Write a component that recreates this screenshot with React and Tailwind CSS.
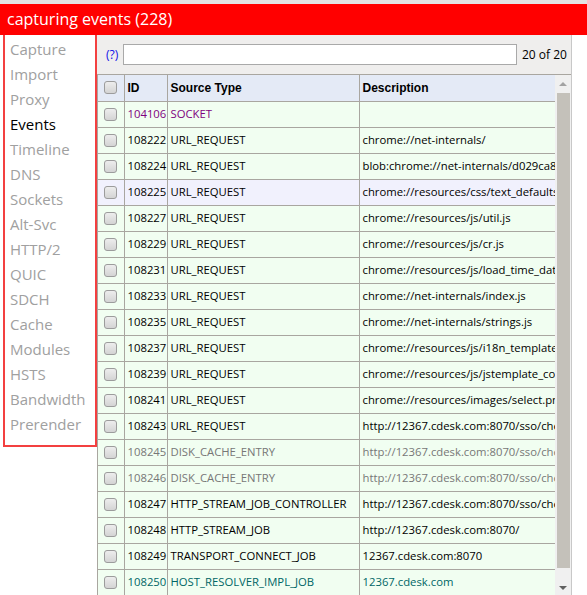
import React from "react";

const NAV = ["Capture","Import","Proxy","Events","Timeline","DNS","Sockets","Alt-Svc","HTTP/2","QUIC","SDCH","Cache","Modules","HSTS","Bandwidth","Prerender"];

const ROWS = [
  ["104106","SOCKET","","purple"],
  ["108222","URL_REQUEST","chrome://net-internals/",""],
  ["108224","URL_REQUEST","blob:chrome://net-internals/d029ca8e-7c1f","" ],
  ["108225","URL_REQUEST","chrome://resources/css/text_defaults.css","sel"],
  ["108227","URL_REQUEST","chrome://resources/js/util.js",""],
  ["108229","URL_REQUEST","chrome://resources/js/cr.js",""],
  ["108231","URL_REQUEST","chrome://resources/js/load_time_data.js",""],
  ["108233","URL_REQUEST","chrome://net-internals/index.js",""],
  ["108235","URL_REQUEST","chrome://net-internals/strings.js",""],
  ["108237","URL_REQUEST","chrome://resources/js/i18n_template.js",""],
  ["108239","URL_REQUEST","chrome://resources/js/jstemplate_compiled.js",""],
  ["108241","URL_REQUEST","chrome://resources/images/select.png",""],
  ["108243","URL_REQUEST","http://12367.cdesk.com:8070/sso/checklogin",""],
  ["108245","DISK_CACHE_ENTRY","http://12367.cdesk.com:8070/sso/checklogin","gray"],
  ["108246","DISK_CACHE_ENTRY","http://12367.cdesk.com:8070/sso/checklogin","gray"],
  ["108247","HTTP_STREAM_JOB_CONTROLLER","http://12367.cdesk.com:8070/sso/checklogin",""],
  ["108248","HTTP_STREAM_JOB","http://12367.cdesk.com:8070/",""],
  ["108249","TRANSPORT_CONNECT_JOB","12367.cdesk.com:8070",""],
  ["108250","HOST_RESOLVER_IMPL_JOB","12367.cdesk.com","teal"],
];

function Check() {
  return (
    <div className="w-[13px] h-[13px] rounded-[3px] border border-[#9c9c9c] bg-gradient-to-b from-[#ededed] to-[#d4d4d4]" />
  );
}

const HEAD = { fontFamily: "'Liberation Sans', Arial, sans-serif" };

export default function App() {
  return (
    <div className="w-[587px] h-[595px] overflow-hidden bg-white flex flex-col" style={{ fontFamily: "'Open Sans', 'Noto Sans', sans-serif" }}>
      <div className="h-[4px] bg-[#e3e3e3] shrink-0" />
      <div className="h-[31px] shrink-0 bg-[#ff0000] text-white text-[16px] leading-[31px] pl-[7px]">capturing events (228)</div>
      <div className="flex flex-1 min-h-0">
        <div className="self-start ml-[3px] w-[94px] border-2 border-t-0 border-[#f34040] pt-[2px] pb-[8px] pl-[5px]">
          {NAV.map((n) => (
            <div key={n} className={"h-[25px] leading-[25px] text-[15px] " + (n === "Events" ? "text-black" : "text-[#a0a0a0]")}>{n}</div>
          ))}
        </div>
        <div className="w-[475px] shrink-0 flex flex-col bg-[#efeeed] border-r border-[#c8c8c8] min-h-0">
          <div className="h-[39px] shrink-0 flex items-center pl-[9px]">
            <span className="text-[12px] text-[#1010e8] w-[17px]">(?)</span>
            <div className="w-[394px] h-[21px] bg-white border border-[#a9a9a9]" />
            <span className="ml-[5px] text-[12px] text-black">20 of 20</span>
          </div>
          <div className="flex flex-1 min-h-0 border-t border-[#a9a6a0]">
            <div className="flex-1 min-w-0 overflow-hidden border-l border-[#a9a6a0]">
              <table className="border-collapse table-fixed w-[458px] text-[11.3px]">
                <colgroup>
                  <col className="w-[26px]" />
                  <col className="w-[43px]" />
                  <col className="w-[192px]" />
                  <col className="w-[197px]" />
                </colgroup>
                <thead>
                  <tr className="h-[26px] bg-[#e4eaf6]">
                    <th className="border-r border-b border-[#a9a6a0] px-[6px]"><Check /></th>
                    <th className="border-r border-b border-[#a9a6a0] text-left px-[3px] font-bold text-[12px]" style={HEAD}>ID</th>
                    <th className="border-r border-b border-[#a9a6a0] text-left px-[3px] font-bold text-[12px]" style={HEAD}>Source Type</th>
                    <th className="border-b border-[#a9a6a0] text-left px-[3px] font-bold text-[12px]" style={HEAD}>Description</th>
                  </tr>
                </thead>
                <tbody>
                  {ROWS.map(([id, type, desc, k]) => {
                    const color = k === "purple" ? "text-[#800080]" : k === "gray" ? "text-[#777777]" : k === "teal" ? "text-[#006666]" : "text-black";
                    const bg = k === "sel" ? "bg-[#f1f1fd]" : "bg-[#f1fef1]";
                    return (
                      <tr key={id} className={"h-[26px] " + bg + " " + color}>
                        <td className="border-r border-b border-[#a9a6a0] px-[6px]"><Check /></td>
                        <td className="border-r border-b border-[#a9a6a0] pl-[3px] pr-0 whitespace-nowrap overflow-hidden">{id}</td>
                        <td className="border-r border-b border-[#a9a6a0] px-[3px] whitespace-nowrap overflow-hidden">{type}</td>
                        <td className="border-b border-[#a9a6a0] px-[3px] whitespace-nowrap overflow-hidden">{desc}</td>
                      </tr>
                    );
                  })}
                </tbody>
              </table>
            </div>
            <div className="w-[16px] shrink-0 bg-[#f0f0f0] flex flex-col items-center">
              <div className="h-[18px] flex items-center justify-center">
                <div className="w-0 h-0 border-l-[4px] border-r-[4px] border-b-[4px] border-l-transparent border-r-transparent border-b-[#a3a3a3]" />
              </div>
              <div className="w-[13px] h-[475px] bg-[#c4c1ba]" />
              <div className="flex-1" />
              <div className="h-[14px] flex items-center justify-center">
                <div className="w-0 h-0 border-l-[4px] border-r-[4px] border-t-[4px] border-l-transparent border-r-transparent border-t-[#606060]" />
              </div>
            </div>
          </div>
        </div>
        <div className="flex-1" />
      </div>
    </div>
  );
}
